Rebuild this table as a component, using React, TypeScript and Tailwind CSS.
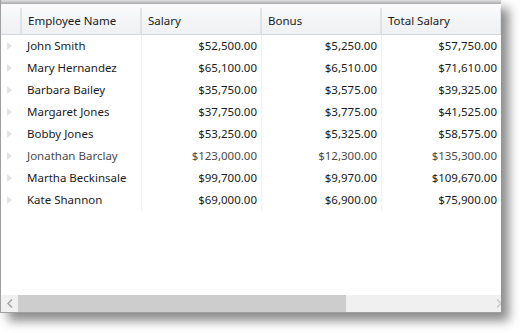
const rows = [
  { name: 'John Smith', salary: '$52,500.00', bonus: '$5,250.00', total: '$57,750.00' },
  { name: 'Mary Hernandez', salary: '$65,100.00', bonus: '$6,510.00', total: '$71,610.00' },
  { name: 'Barbara Bailey', salary: '$35,750.00', bonus: '$3,575.00', total: '$39,325.00' },
  { name: 'Margaret Jones', salary: '$37,750.00', bonus: '$3,775.00', total: '$41,525.00' },
  { name: 'Bobby Jones', salary: '$53,250.00', bonus: '$5,325.00', total: '$58,575.00' },
  { name: 'Jonathan Barclay', salary: '$123,000.00', bonus: '$12,300.00', total: '$135,300.00', dim: true },
  { name: 'Martha Beckinsale', salary: '$99,700.00', bonus: '$9,970.00', total: '$109,670.00' },
  { name: 'Kate Shannon', salary: '$69,000.00', bonus: '$6,900.00', total: '$75,900.00' },
];

const headers = ['Employee Name', 'Salary', 'Bonus', 'Total Salary'];

export default function App() {
  return (
    <div className="w-[522px] h-[333px] bg-white overflow-hidden" style={{ fontFamily: '"Noto Sans", sans-serif' }}>
      <div className="w-[501px] h-[313px] bg-white border-l border-b border-[#a0a0a0] shadow-[8px_8px_10px_rgba(0,0,0,0.45)] flex flex-col overflow-hidden">
        {/* top bar */}
        <div className="h-[4px] bg-gradient-to-b from-[#e2e2e2] to-[#a9a9ad] shrink-0" />

        {/* header */}
        <div className="flex h-[31px] shrink-0 bg-gradient-to-b from-[#fbfbfc] to-[#eef0f2] border-b border-[#d5d7da] text-[11.5px] text-[#1b1b1b]">
          <div className="w-[21px] shrink-0 border-r-2 border-[#dfe1e4] mt-[4px]" />
          {headers.map((h) => (
            <div key={h} className="w-[120px] shrink-0 border-r-2 border-[#dfe1e4] mt-[4px] pl-[6px] flex items-center">
              {h}
            </div>
          ))}
        </div>

        {/* body */}
        <div className="flex-1 text-[11.5px] text-[#1b1b1b]">
          {rows.map((r) => (
            <div key={r.name} className="flex h-[22px]">
              <div className="w-[21px] shrink-0 flex items-center justify-start pl-[6px]">
                <svg width="5" height="8" viewBox="0 0 5 8">
                  <path d="M0 0 L5 4 L0 8 Z" fill="#e3e3e3" />
                </svg>
              </div>
              <div className={`w-[120px] shrink-0 border-r border-[#f0f0f0] pl-[5px] flex items-center ${r.dim ? 'text-[#4a4a4a]' : ''}`}>
                {r.name}
              </div>
              <div className={`w-[120px] shrink-0 border-r border-[#f0f0f0] pr-[4px] flex items-center justify-end ${r.dim ? 'text-[#4a4a4a]' : ''}`}>
                {r.salary}
              </div>
              <div className={`w-[120px] shrink-0 border-r border-[#f0f0f0] pr-[4px] flex items-center justify-end ${r.dim ? 'text-[#4a4a4a]' : ''}`}>
                {r.bonus}
              </div>
              <div className={`w-[120px] shrink-0 border-r border-[#f0f0f0] pr-[4px] flex items-center justify-end ${r.dim ? 'text-[#4a4a4a]' : ''}`}>
                {r.total}
              </div>
            </div>
          ))}
        </div>

        {/* horizontal scrollbar */}
        <div className="h-[17px] shrink-0 flex bg-[#f0f0f0]">
          <div className="w-[17px] flex items-center justify-center">
            <svg width="6" height="9" viewBox="0 0 6 9">
              <path d="M5 0.5 L1 4.5 L5 8.5" stroke="#a3a3a3" strokeWidth="1.5" fill="none" />
            </svg>
          </div>
          <div className="w-[328px] bg-[#cdcdcd]" />
          <div className="flex-1 flex items-center justify-end">
            <svg width="4" height="9" viewBox="0 0 4 9">
              <path d="M0 0.5 L4 4.5 L0 8.5" stroke="#c8c8c8" strokeWidth="1.5" fill="none" />
            </svg>
          </div>
        </div>
      </div>
    </div>
  );
}
